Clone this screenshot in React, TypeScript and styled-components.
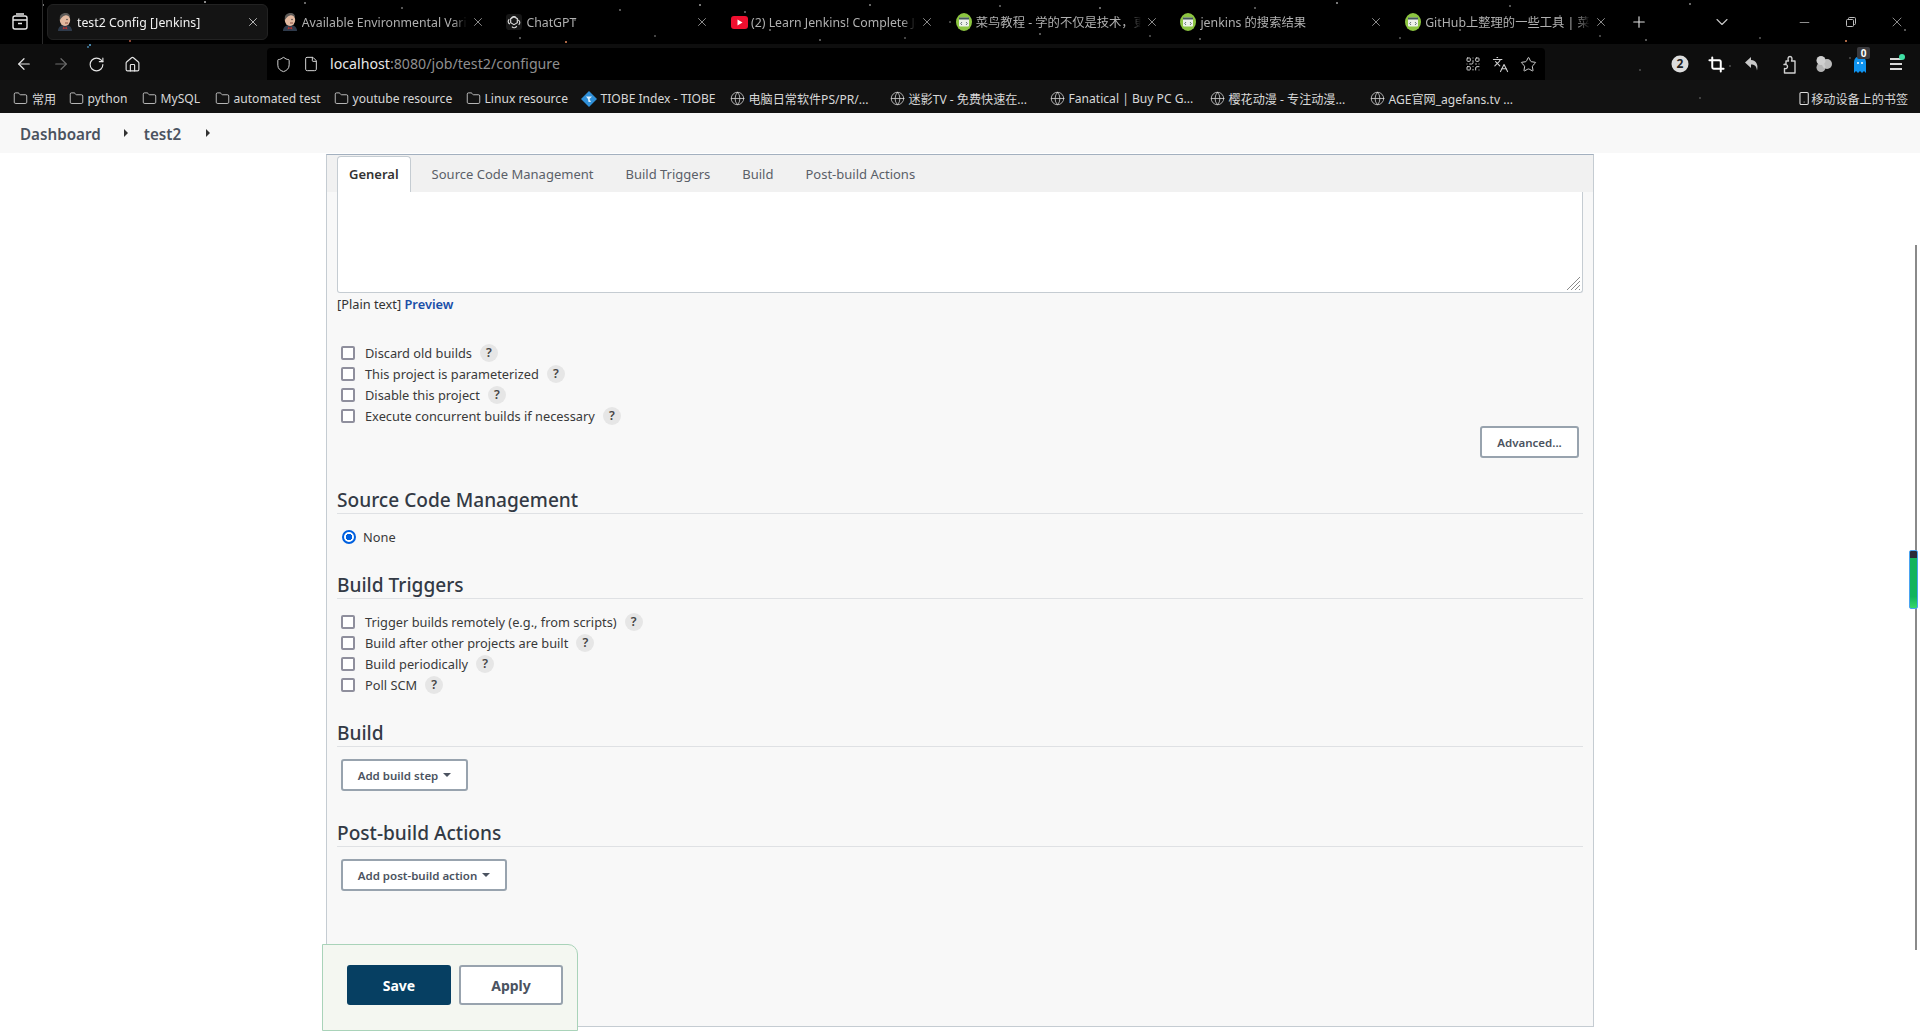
import styled, { createGlobalStyle } from "styled-components";
import {
  ArrowLeft,
  ArrowRight,
  ChevronDown,
  Crop,
  File,
  Folder,
  Globe,
  Home,
  Languages,
  Minus,
  Plus,
  QrCode,
  RotateCw,
  Shield,
  Smartphone,
  Star,
  X,
} from "lucide-react";

const SANS = `"Noto Sans", "Noto Sans CJK SC", "Liberation Sans", sans-serif`;

const GlobalStyle = createGlobalStyle`
  html, body {
    margin: 0;
    height: 1032px;
    overflow: hidden;
    background: #fff;
    font-family: ${SANS};
  }
  * { box-sizing: border-box; }
`;

// the browser theme has a star field behind tabs and toolbars
const STARS: [number, number, string][] = [
  [43, 5, "#777"], [205, 2, "#888"], [88, 47, "#2b5a78"], [90, 45, "#3d7ea6"], [130, 41, "#843"],
  [305, 3, "#666"], [402, 8, "#555"], [520, 38, "#555"], [575, 20, "#444"], [566, 42, "#a64"],
  [700, 5, "#777"], [770, 30, "#555"], [820, 40, "#555"], [870, 5, "#666"], [950, 22, "#444"],
  [1040, 34, "#555"], [1100, 8, "#666"], [1200, 39, "#555"], [1337, 3, "#777"], [1460, 30, "#555"],
  [1560, 16, "#444"], [1646, 40, "#555"], [1690, 4, "#666"], [1760, 38, "#444"], [1846, 41, "#a64"],
  [1905, 30, "#555"], [1730, 66, "#333"], [1640, 70, "#333"], [1850, 58, "#333"], [1700, 98, "#333"],
  [620, 10, "#555"], [655, 36, "#444"], [745, 12, "#555"], [905, 38, "#444"], [1000, 6, "#555"],
  [1150, 36, "#444"], [1255, 8, "#555"], [1400, 38, "#444"], [1510, 6, "#555"], [1600, 36, "#444"],
];

const starField = STARS.map(
  ([x, y, c]) => `radial-gradient(circle 1px at ${x}px ${y}px, ${c} 100%, transparent 100%)`
).join(", ");

const JenkinsIcon = () => (
  <svg width="16" height="20" viewBox="0 0 16 20">
    <path d="M1 19c0-4 3-6 7-6s7 2 7 6z" fill="#2f3b4c" />
    <path d="M6.500 14.500L8 16l1.500-1.500 1 3-2.500-1-2.500 1z" fill="#b3312f" />
    <ellipse cx="8" cy="8" rx="5.200" ry="6" fill="#e3b9a0" />
    <path d="M3 8C2 3 5 1 8.500 1c3 0 5 2 4.500 5-1-2-3-3-5-2.500C6 4 4.500 5.500 3 8z" fill="#5c5a58" />
    <circle cx="10" cy="7.500" r=".7" fill="#333" />
    <path d="M8 11h3" stroke="#8c5144" />
  </svg>
);

const ChatIcon = () => (
  <svg width="16" height="16" viewBox="0 0 24 24" fill="none" stroke="#d6d6d6" strokeWidth="1.800">
    <rect width="24" height="24" rx="5" fill="#161616" stroke="none" />
    <path d="M12 4l5 3v6l-5 3-5-3V7z" />
    <path d="M8 6.500a4 4 0 0 1 7-1M18 9a4 4 0 0 1 1 7M16 18a4 4 0 0 1-7 1M6 15a4 4 0 0 1-1-7" />
  </svg>
);

const YoutubeIcon = () => (
  <svg width="17" height="13" viewBox="0 0 17 13">
    <rect width="17" height="13" rx="3" fill="#f00f2f" />
    <path d="M6.500 3.500L11.500 6.500 6.500 9.500z" fill="#fff" />
  </svg>
);

const RunoobIcon = () => (
  <svg width="16" height="18" viewBox="0 0 16 18">
    <ellipse cx="8" cy="9" rx="8" ry="9" fill="#8cc540" />
    <rect x="3" y="4.500" width="10" height="9" rx="1" fill="#eef2ea" />
    <rect x="3" y="4.500" width="10" height="2" fill="#44565c" />
    <path d="M6 9l-1.300 1.500L6 12M10 9l1.300 1.500L10 12" stroke="#44565c" strokeWidth=".8" fill="none" />
  </svg>
);

const TiobeIcon = () => (
  <svg width="16" height="16" viewBox="0 0 16 16">
    <path d="M8 0l8 8-8 8-8-8z" fill="#2f8fd8" />
    <path d="M5 5.500h6L8.500 8 10 11H7.500L7 8z" fill="#dff0fb" />
  </svg>
);

const TabGroupIcon = () => (
  <svg width="18" height="18" viewBox="0 0 18 18" fill="none" stroke="#e8e8e8" strokeWidth="1.400">
    <rect x="2" y="3" width="14" height="13" rx="2" />
    <path d="M2 7h14M7 10.500h4M5 1h8" />
  </svg>
);

const RestoreIcon = () => (
  <svg width="12" height="12" viewBox="0 0 12 12" fill="none" stroke="#bdbdbd">
    <rect x="1.500" y="3.500" width="7" height="7" rx="1" />
    <path d="M3.500 3.500v-1a1 1 0 0 1 1-1h5a1 1 0 0 1 1 1v5a1 1 0 0 1-1 1h-1" />
  </svg>
);

const ScreenshotBadge = () => (
  <svg width="20" height="20" viewBox="0 0 20 20">
    <circle cx="10" cy="10" r="8.500" fill="#dcdcdc" />
    <text x="10" y="14" textAnchor="middle" fontSize="12" fontWeight="700" fill="#222" fontFamily="Noto Sans">
      2
    </text>
  </svg>
);

const BackArrowIcon = () => (
  <svg width="16" height="18" viewBox="0 0 16 18" fill="#c8c8c8">
    <path d="M7 2L1 7.500 7 13V9.500c3.500 0 5.500 1.500 6 6 1.500-5.500-.5-10-6-10.500z" />
  </svg>
);

const PuzzleIcon = () => (
  <svg width="15" height="19" viewBox="0 0 15 19" fill="none" stroke="#d0d0d0" strokeWidth="1.400" strokeLinejoin="round">
    <path d="M5 6h2.500C6.500 4 7 1.500 9 1.500s2.500 2.500 1.500 4.500H14v12H3.500v-4.500C5.500 14 6.500 13 6.500 11.500S5 9 3 9.500L5 9z" />
  </svg>
);

const BlobIcon = () => (
  <svg width="18" height="18" viewBox="0 0 18 18" fill="#cfcfcf">
    <circle cx="6" cy="5.500" r="4.500" />
    <circle cx="6" cy="12.500" r="4.500" opacity=".85" />
    <circle cx="12" cy="9" r="5" opacity=".9" />
  </svg>
);

const GhostIcon = () => (
  <svg width="14" height="20" viewBox="0 0 14 20">
    <path d="M1 8a6 6 0 0 1 12 0v11l-2-2-2 2-2-2-2 2-2-2-2 2z" fill="#0f93ef" />
    <circle cx="5" cy="9" r="1" fill="#fff" />
    <circle cx="9" cy="9" r="1" fill="#fff" />
  </svg>
);

const tabs = [
  { title: "test2 Config [Jenkins]", icon: <JenkinsIcon />, active: true },
  { title: "Available Environmental Variables", icon: <JenkinsIcon /> },
  { title: "ChatGPT", icon: <ChatIcon /> },
  { title: "(2) Learn Jenkins! Complete Jenkins Course", icon: <YoutubeIcon /> },
  { title: "菜鸟教程 - 学的不仅是技术，更是梦想！", icon: <RunoobIcon /> },
  { title: "jenkins 的搜索结果", icon: <RunoobIcon /> },
  { title: "GitHub上整理的一些工具 | 菜鸟教程", icon: <RunoobIcon /> },
];

const bookmarks = [
  { label: "常用", width: 55.5, kind: "folder" },
  { label: "python", width: 73, kind: "folder" },
  { label: "MySQL", width: 73, kind: "folder" },
  { label: "automated test", width: 119, kind: "folder" },
  { label: "youtube resource", width: 132, kind: "folder" },
  { label: "Linux resource", width: 115, kind: "folder" },
  { label: "TIOBE Index - TIOBE", width: 149, kind: "tiobe" },
  { label: "电脑日常软件PS/PR/...", width: 160, kind: "globe" },
  { label: "迷影TV - 免费快速在...", width: 160, kind: "globe" },
  { label: "Fanatical | Buy PC G...", width: 160, kind: "globe" },
  { label: "樱花动漫 - 专注动漫...", width: 160, kind: "globe" },
  { label: "AGE官网_agefans.tv ...", width: 160, kind: "globe" },
];

const generalOptions = [
  "Discard old builds",
  "This project is parameterized",
  "Disable this project",
  "Execute concurrent builds if necessary",
];

const triggerOptions = [
  "Trigger builds remotely (e.g., from scripts)",
  "Build after other projects are built",
  "Build periodically",
  "Poll SCM",
];

const configTabs = ["General", "Source Code Management", "Build Triggers", "Build", "Post-build Actions"];

const OptionList = ({ items, gap }: { items: string[]; gap: number }) => (
  <Options $gap={gap}>
    {items.map((label) => (
      <OptionRow key={label}>
        <CheckBox type="checkbox" readOnly />
        <OptionLabel>{label}</OptionLabel>
        <HelpBadge>?</HelpBadge>
      </OptionRow>
    ))}
  </Options>
);

const App = () => {
  return (
    <Page>
      <GlobalStyle />
      <BrowserChrome>
        <TabStrip>
          <TabGroup>
            <TabGroupIcon />
          </TabGroup>
          {tabs.map((tab) => (
            <Tab key={tab.title} $active={tab.active}>
              <TabIcon>{tab.icon}</TabIcon>
              <TabTitle $active={tab.active}>{tab.title}</TabTitle>
              <X size={14} strokeWidth={1.3} color={tab.active ? "#e8e8e8" : "#b5b5b5"} />
            </Tab>
          ))}
          <NewTab>
            <Plus size={18} strokeWidth={1.5} color="#e0e0e0" />
          </NewTab>
          <TabMenu>
            <ChevronDown size={20} strokeWidth={1.3} color="#c8c8c8" />
          </TabMenu>
          <WindowControls>
            <Minus size={15} strokeWidth={1.2} color="#bdbdbd" />
            <RestoreIcon />
            <X size={16} strokeWidth={1.1} color="#bdbdbd" />
          </WindowControls>
        </TabStrip>
        <Toolbar>
          <NavButtons>
            <ArrowLeft size={18} strokeWidth={1.6} color="#e6e6e6" />
            <ArrowRight size={18} strokeWidth={1.6} color="#6d6d6d" />
            <RotateCw size={17} strokeWidth={1.6} color="#e6e6e6" />
            <Home size={17} strokeWidth={1.6} color="#e6e6e6" />
          </NavButtons>
          <UrlBar>
            <Shield size={17} strokeWidth={1.4} color="#d5d5d5" />
            <File size={16} strokeWidth={1.5} color="#d5d5d5" />
            <UrlText>
              localhost<UrlRest>:8080/job/test2/configure</UrlRest>
            </UrlText>
            <UrlActions>
              <QrCode size={16} strokeWidth={1.5} color="#d0d0d0" />
              <Languages size={17} strokeWidth={1.5} color="#d0d0d0" />
              <Star size={17} strokeWidth={1.4} color="#d0d0d0" />
            </UrlActions>
          </UrlBar>
          <Extensions>
            <ScreenshotBadge />
            <Crop size={17} strokeWidth={2.8} color="#fff" />
            <BackArrowIcon />
            <PuzzleIcon />
            <BlobIcon />
            <GhostSlot>
              <GhostIcon />
              <CountBadge>0</CountBadge>
            </GhostSlot>
            <MenuSlot>
              <MenuLine />
              <MenuLine />
              <MenuLine />
              <MenuDot />
            </MenuSlot>
          </Extensions>
        </Toolbar>
        <BookmarkBar>
          {bookmarks.map((b) => (
            <Bookmark key={b.label} $w={b.width}>
              {b.kind === "folder" && <Folder size={15} strokeWidth={1.3} color="#dcdcdc" />}
              {b.kind === "globe" && <Globe size={15} strokeWidth={1.2} color="#dcdcdc" />}
              {b.kind === "tiobe" && <TiobeIcon />}
              <span>{b.label}</span>
            </Bookmark>
          ))}
          <MobileBookmarks>
            <Smartphone size={15} strokeWidth={1.8} color="#dcdcdc" />
            <span>移动设备上的书签</span>
          </MobileBookmarks>
        </BookmarkBar>
      </BrowserChrome>

      <Breadcrumbs>
        <Crumb>Dashboard</Crumb>
        <CrumbArrow />
        <Crumb>test2</Crumb>
        <CrumbArrow />
      </Breadcrumbs>

      <Main>
        <Panel>
          <TabBar>
            {configTabs.map((t, i) => (
              <ConfigTab key={t} $active={i === 0}>
                {t}
              </ConfigTab>
            ))}
          </TabBar>
          <Description>
            <ResizeGrip width="15" height="15" viewBox="0 0 15 15" stroke="#8a8a8a">
              <path d="M1 14L14 1M5 14L14 5M9 14L14 9M13 14L14 13" />
            </ResizeGrip>
          </Description>
          <PreviewRow>
            [Plain text] <PreviewLink>Preview</PreviewLink>
          </PreviewRow>
          <OptionList items={generalOptions} gap={27} />
          <AdvancedRow>
            <GhostButton $w={99}>Advanced...</GhostButton>
          </AdvancedRow>

          <SectionHeading $gap={25}>Source Code Management</SectionHeading>
          <RadioRow>
            <RadioDot />
            <OptionLabel>None</OptionLabel>
          </RadioRow>

          <SectionHeading $gap={21}>Build Triggers</SectionHeading>
          <OptionList items={triggerOptions} gap={12} />

          <SectionHeading $gap={21}>Build</SectionHeading>
          <ButtonRow>
            <GhostButton $w={127}>
              Add build step
              <Caret />
            </GhostButton>
          </ButtonRow>

          <SectionHeading $gap={25}>Post-build Actions</SectionHeading>
          <ButtonRow>
            <GhostButton $w={166}>
              Add post-build action
              <Caret />
            </GhostButton>
          </ButtonRow>
        </Panel>
      </Main>

      <StickyBar>
        <SaveButton>Save</SaveButton>
        <ApplyButton>Apply</ApplyButton>
      </StickyBar>

      <ScrollThumb />
      <ScrollGauge />
    </Page>
  );
};

export default App;

const Page = styled.div`
  position: relative;
  width: 1920px;
  height: 1032px;
  overflow: hidden;
`;

const BrowserChrome = styled.header`
  height: 113px;
  background-color: #000;
  background-image: ${starField};
  color: #d8d8d8;
  font-size: 13px;
`;

const TabStrip = styled.div`
  height: 44px;
  display: flex;
  align-items: center;
`;

const TabGroup = styled.div`
  width: 43px;
  height: 44px;
  padding-left: 11px;
  display: flex;
  align-items: center;
  border-right: 1px solid #2a2a2a;
  margin-right: 4px;
`;

const Tab = styled.div<{ $active?: boolean }>`
  width: 221px;
  height: 36px;
  margin-right: 3.7px;
  padding: 0 7px 0 9px;
  display: flex;
  align-items: center;
  border-radius: 6px;
  background: ${(p) => (p.$active ? "#141414" : "transparent")};
  border: 1px solid ${(p) => (p.$active ? "#222" : "transparent")};
`;

const TabIcon = styled.span`
  width: 20px;
  flex: none;
  display: flex;
  align-items: center;
`;

const TabTitle = styled.span<{ $active?: boolean }>`
  flex: 1;
  min-width: 0;
  margin-right: 4px;
  overflow: hidden;
  white-space: nowrap;
  font-size: 12.3px;
  color: ${(p) => (p.$active ? "#f2f2f2" : "#b0b0b0")};
  mask-image: linear-gradient(to left, transparent, #000 14px);
`;

const NewTab = styled.div`
  margin-left: 10px;
  width: 24px;
  display: flex;
`;

const TabMenu = styled.div`
  margin-left: 58px;
  width: 20px;
  display: flex;
`;

const WindowControls = styled.div`
  margin-left: auto;
  width: 123px;
  padding-right: 15px;
  display: flex;
  align-items: center;
  justify-content: space-between;
`;

const Toolbar = styled.div`
  height: 36px;
  display: flex;
  align-items: flex-start;
  background: rgba(255, 255, 255, 0.055);
`;

const NavButtons = styled.div`
  width: 267px;
  height: 36px;
  padding: 4px 0 0 15px;
  display: flex;
  align-items: center;
  gap: 18.5px;
`;

const UrlBar = styled.div`
  width: 1278px;
  height: 32px;
  margin-top: 4px;
  padding: 0 8px;
  display: flex;
  align-items: center;
  gap: 11px;
  background: #000;
  border-radius: 4px 4px 0 0;
`;

const UrlText = styled.span`
  margin-top: -2px;
  font-size: 14.2px;
  color: #e6e6e6;
`;

const UrlRest = styled.span`
  color: #8f8f8f;
`;

const UrlActions = styled.div`
  margin-left: auto;
  display: flex;
  align-items: center;
  gap: 11px;
`;

const Extensions = styled.div`
  height: 40px;
  padding-left: 117px;
  display: grid;
  grid-template-columns: repeat(7, 36px);
  align-items: center;
  justify-items: center;
`;

const GhostSlot = styled.div`
  position: relative;
  display: flex;
`;

const CountBadge = styled.span`
  position: absolute;
  top: -7px;
  left: 4px;
  width: 13px;
  height: 12px;
  border-radius: 2px;
  background: #3a3a3e;
  color: #fff;
  font-size: 10px;
  font-weight: 700;
  line-height: 12px;
  text-align: center;
`;

const MenuSlot = styled.div`
  position: relative;
  width: 12px;
  display: flex;
  flex-direction: column;
  gap: 3.5px;
`;

const MenuLine = styled.i`
  display: block;
  width: 12px;
  height: 1.5px;
  background: #d8d8d8;
`;

const MenuDot = styled.i`
  position: absolute;
  top: -4px;
  right: -3px;
  width: 6px;
  height: 6px;
  border-radius: 50%;
  background: #3fe0a5;
`;

const BookmarkBar = styled.nav`
  height: 33px;
  padding: 4px 12px 0 13px;
  display: flex;
  align-items: center;
  background: rgba(255, 255, 255, 0.07);
  white-space: nowrap;
`;

const Bookmark = styled.div<{ $w: number }>`
  width: ${(p) => p.$w}px;
  flex: none;
  display: flex;
  align-items: center;
  gap: 4px;
  color: #d8d8d8;
  font-size: 12.1px;
`;

const MobileBookmarks = styled(Bookmark).attrs({ $w: 111 })`
  margin-left: auto;
  gap: 0;
`;

const Breadcrumbs = styled.nav`
  height: 40px;
  padding: 2px 0 0 20px;
  display: flex;
  align-items: center;
  background: #f8f8f8;
`;

const Crumb = styled.span`
  font-size: 15.2px;
  font-weight: 600;
  color: #4b5360;
`;

const CrumbArrow = styled.i`
  width: 0;
  height: 0;
  margin: -2px 16px 0 23px;
  border-style: solid;
  border-width: 4px 0 4px 4px;
  border-color: transparent transparent transparent #333;
  &:last-child {
    margin-left: 25px;
  }
`;

const Main = styled.main`
  padding: 1px 0 0 326px;
`;

const Panel = styled.section`
  width: 1268px;
  height: 873px;
  padding: 0 10px;
  background: #f8f8f8;
  border: 1px solid #c5ccd2;
  border-top-color: #a3b0bf;
`;

const TabBar = styled.div`
  height: 37px;
  margin: 0 -10px;
  padding: 1px 0 0 10px;
  display: flex;
  background: #f1f1f1;
`;

const ConfigTab = styled.div<{ $active: boolean }>`
  height: 36px;
  padding: 0 11px 2px;
  margin-right: ${(p) => (p.$active ? 9 : 8)}px;
  display: flex;
  align-items: center;
  font-size: 13px;
  font-weight: ${(p) => (p.$active ? 600 : 400)};
  color: ${(p) => (p.$active ? "#333" : "#5a5f68")};
  background: ${(p) => (p.$active ? "#fff" : "transparent")};
  border: 1px solid ${(p) => (p.$active ? "#c5ccd2" : "transparent")};
  border-bottom: 0;
  border-radius: 4px 4px 0 0;
`;

const Description = styled.div`
  position: relative;
  height: 101px;
  background: #fff;
  border: 1px solid #c5ccd2;
  border-top: 0;
  border-radius: 0 0 3px 3px;
`;

const ResizeGrip = styled.svg`
  position: absolute;
  right: 1px;
  bottom: 1px;
`;

const PreviewRow = styled.div`
  margin-top: 1px;
  height: 21px;
  line-height: 21px;
  font-size: 12.8px;
  color: #333;
`;

const PreviewLink = styled.span`
  font-weight: 600;
  color: #1a4fa8;
`;

const Options = styled.div<{ $gap: number }>`
  margin-top: ${(p) => p.$gap}px;
  padding-left: 4px;
`;

const OptionRow = styled.div`
  height: 21px;
  display: flex;
  align-items: center;
`;

const CheckBox = styled.input`
  appearance: none;
  width: 14px;
  height: 14px;
  margin: 0 10px 0 0;
  border: 2px solid #8f8f9d;
  border-radius: 2px;
  background: #fff;
`;

const OptionLabel = styled.span`
  font-size: 12.8px;
  color: #3a3a3a;
`;

const HelpBadge = styled.span`
  width: 18px;
  height: 18px;
  margin-left: 8px;
  border-radius: 50%;
  background: #e6e6e6;
  color: #444;
  font-size: 12.5px;
  font-weight: 600;
  line-height: 18px;
  text-align: center;
`;

const AdvancedRow = styled.div`
  padding-right: 4px;
  display: flex;
  justify-content: flex-end;
`;

const SectionHeading = styled.h2<{ $gap: number }>`
  height: 31px;
  margin: ${(p) => p.$gap}px 0 0;
  font-size: 19.1px;
  font-weight: 500;
  line-height: 34px;
  color: #333a45;
  border-bottom: 1px solid #dfe1e4;
`;

const RadioRow = styled.div`
  height: 21px;
  margin-top: 12px;
  padding-left: 5px;
  display: flex;
  align-items: center;
`;

const RadioDot = styled.i`
  width: 14px;
  height: 14px;
  margin-right: 7px;
  border-radius: 50%;
  border: 2px solid #0060df;
  background: radial-gradient(circle, #0060df 3px, #fff 3.5px);
`;

const ButtonRow = styled.div`
  margin-top: 12px;
  padding-left: 4px;
  display: flex;
`;

const GhostButton = styled.button<{ $w: number }>`
  width: ${(p) => p.$w}px;
  height: 32px;
  padding: 0;
  display: flex;
  align-items: center;
  justify-content: center;
  gap: 5px;
  font-family: inherit;
  font-size: 11.5px;
  font-weight: 600;
  color: #4b5360;
  background: #fff;
  border: 2px solid #98a3ae;
  border-radius: 3px;
`;

const Caret = styled.i`
  width: 0;
  height: 0;
  border-style: solid;
  border-width: 4px 4px 0 4px;
  border-color: #4b5360 transparent transparent transparent;
`;

const StickyBar = styled.div`
  position: absolute;
  left: 322px;
  top: 944px;
  width: 256px;
  height: 87px;
  padding: 20px 0 0 24px;
  display: flex;
  align-items: flex-start;
  gap: 8px;
  background: #f4f7f1;
  border: 1px solid #a9d3b9;
  border-radius: 0 10px 0 0;
`;

const SaveButton = styled.button`
  width: 104px;
  height: 40px;
  font-family: inherit;
  font-size: 14px;
  font-weight: 700;
  color: #fff;
  background: #063f62;
  border: 0;
  border-radius: 3px;
`;

const ApplyButton = styled(SaveButton)`
  color: #4b5360;
  background: #fff;
  border: 2px solid #98a3ae;
`;

const ScrollThumb = styled.div`
  position: absolute;
  left: 1915px;
  top: 245px;
  width: 2px;
  height: 705px;
  background: #8a8a8a;
`;

const ScrollGauge = styled.div`
  position: absolute;
  left: 1909px;
  top: 550px;
  width: 9px;
  height: 59px;
  border: 1px solid #4aa3f0;
  border-radius: 2px;
  background: linear-gradient(#2a2a36 0 12%, #12b45c 12% 80%, #37d868);
`;
